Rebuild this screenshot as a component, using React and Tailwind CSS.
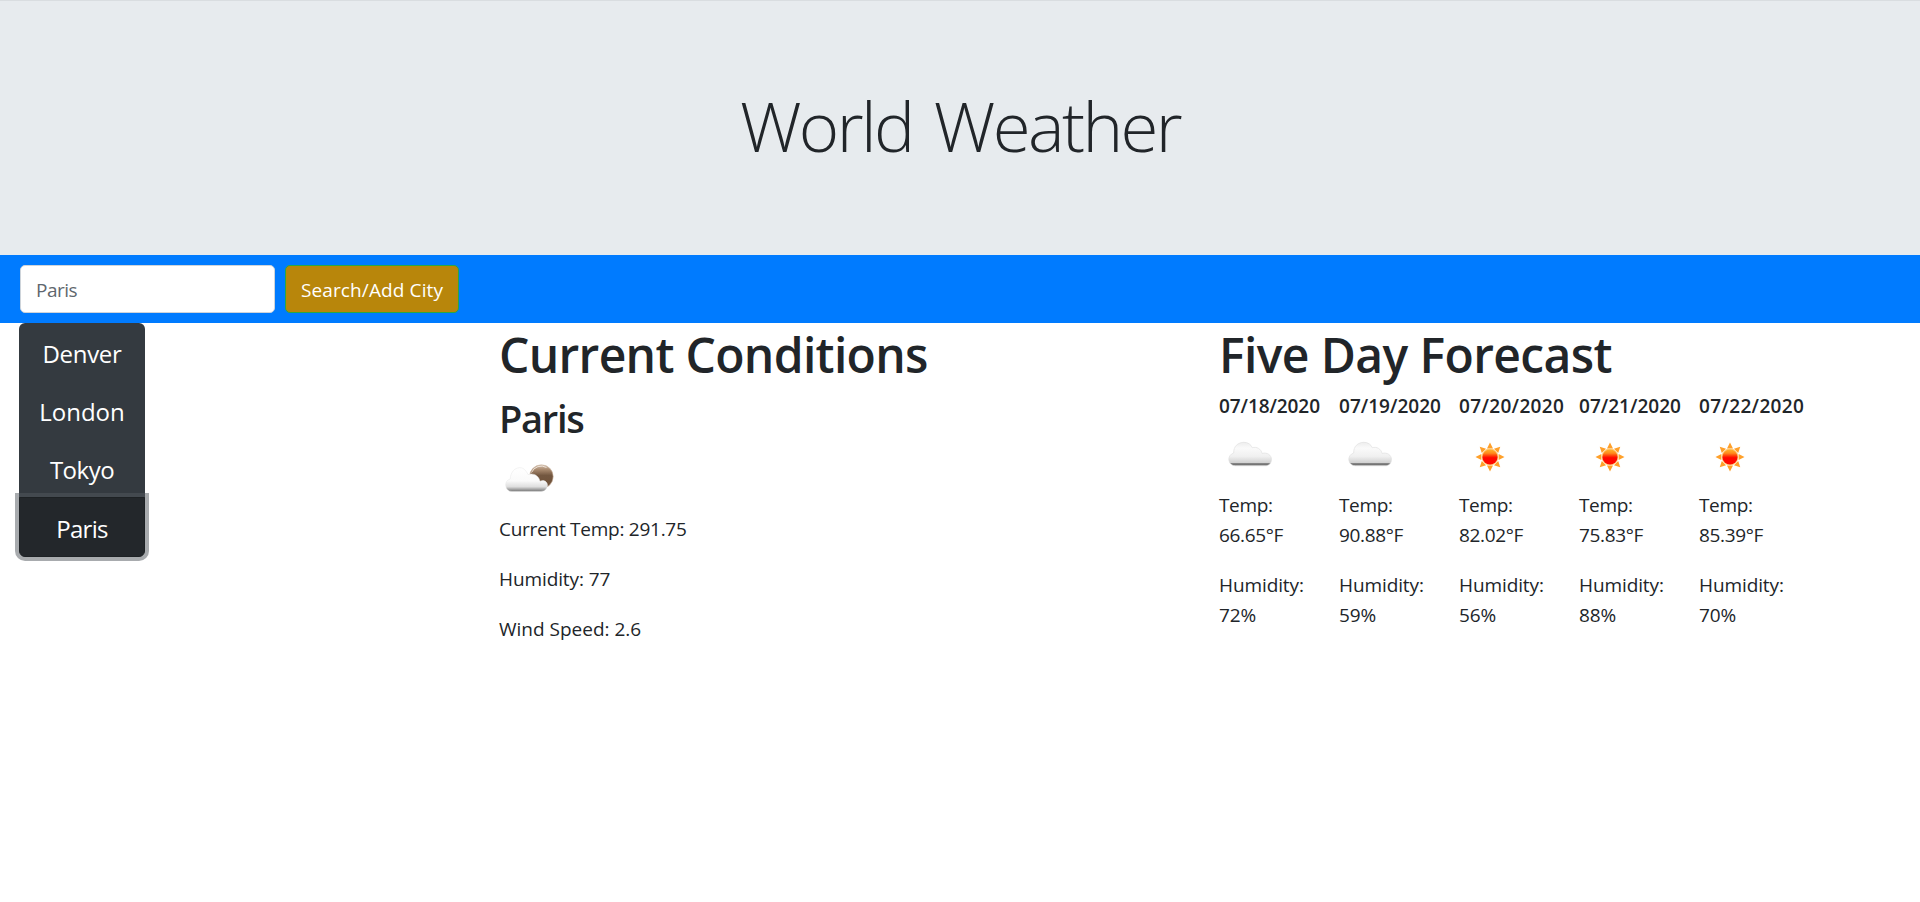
const CITIES = [
  { name: "Denver", className: "rounded-t-[6px] tracking-[-0.3px]" },
  { name: "London", className: "-mt-px tracking-normal" },
  { name: "Tokyo", className: "-mt-px tracking-[-0.5px]" },
];

const FORECAST = [
  { date: "07/18/2020", tracking: "tracking-[-0.08px]", icon: "cloud", temp: "66.65°F", humidity: "72%" },
  { date: "07/19/2020", tracking: "tracking-[0.02px]", icon: "cloud", temp: "90.88°F", humidity: "59%" },
  { date: "07/20/2020", tracking: "tracking-[0.35px]", icon: "sun", temp: "82.02°F", humidity: "56%" },
  { date: "07/21/2020", tracking: "tracking-[0.02px]", icon: "sun", temp: "75.83°F", humidity: "88%" },
  { date: "07/22/2020", tracking: "tracking-[0.35px]", icon: "sun", temp: "85.39°F", humidity: "70%" },
];

function CloudNight() {
  return (
    <svg className="block h-[72px] w-[72px]" viewBox="0 0 72 72" aria-hidden="true">
      <defs>
        <linearGradient id="moon" x1="0" y1="0" x2="0" y2="1">
          <stop offset="0" stopColor="#d3bfad" />
          <stop offset="0.2" stopColor="#aa8b70" />
          <stop offset="0.45" stopColor="#735740" />
          <stop offset="1" stopColor="#6f5138" />
        </linearGradient>
        <linearGradient id="night-cloud" x1="0" y1="0" x2="0" y2="1">
          <stop offset="0" stopColor="#ffffff" />
          <stop offset="0.55" stopColor="#fafafa" />
          <stop offset="0.8" stopColor="#dedede" />
          <stop offset="0.9" stopColor="#a8a8a8" />
          <stop offset="1" stopColor="#777777" />
        </linearGradient>
      </defs>
      <circle cx="42.400" cy="34.600" r="11.800" fill="url(#moon)" stroke="#cdb9a6" strokeWidth="0.6" />
      <path d="M32.500 30.500a10.600 10.600 0 0 1 15-5" fill="none" stroke="#f2e9e0" strokeWidth="0.9" />
      <path
        d="M13 49.500A6.400 6.400 0 0 1 11.200 37C11.700 30 15.800 25.700 20.800 25.700 24.300 25.700 27 28 29 32.600 34 30.700 40 33.500 41 39.300 45.300 37.300 48.500 40 48.500 43.500 48 46.500 46 49.500 42 49.500Z"
        fill="url(#night-cloud)"
        stroke="#e6e6e6"
        strokeWidth="0.5"
      />
    </svg>
  );
}

function Cloud() {
  return (
    <svg className="block h-[69px] w-[69px]" viewBox="0 0 69 69" aria-hidden="true">
      <defs>
        <linearGradient id="cloud" x1="0" y1="0" x2="0" y2="1">
          <stop offset="0" stopColor="#ededed" />
          <stop offset="0.25" stopColor="#fafafa" />
          <stop offset="0.6" stopColor="#f0f0f0" />
          <stop offset="0.86" stopColor="#d2d2d2" />
          <stop offset="0.9" stopColor="#858585" />
          <stop offset="0.96" stopColor="#6f6f6f" />
          <stop offset="1" stopColor="#a5a5a5" />
        </linearGradient>
      </defs>
      <path
        d="M16.500 44.800A6.500 6.500 0 0 1 14.700 32C14.300 25.500 19 21.300 25 21.300 29 21.300 32 23.500 33.300 26.700 37.500 25.300 42.300 28 43 32.400 48 31 52.500 34 52.500 38.500 52.500 42 50 44.800 46.500 44.800Z"
        fill="url(#cloud)"
        stroke="#dddddd"
        strokeWidth="0.6"
      />
    </svg>
  );
}

function Sun() {
  const angles = [0, 45, 90, 135, 180, 225, 270, 315];
  return (
    <svg className="block h-[69px] w-[69px]" viewBox="0 0 69 69" aria-hidden="true">
      <defs>
        <linearGradient id="sun" x1="0" y1="0" x2="0" y2="1">
          <stop offset="0" stopColor="#ffb52b" />
          <stop offset="0.25" stopColor="#ff8a1c" />
          <stop offset="0.45" stopColor="#ff3005" />
          <stop offset="0.55" stopColor="#ff0800" />
          <stop offset="1" stopColor="#ff0800" />
        </linearGradient>
      </defs>
      <g transform="translate(31 36)">
        {angles.map((a) => (
          <path key={a} d="M0-14.500 3-8.600H-3z" fill="#ffa02a" transform={`rotate(${a})`} />
        ))}
        <circle r="8.400" fill="#ffc978" />
        <circle r="7.600" fill="url(#sun)" />
      </g>
    </svg>
  );
}

export default function App() {
  return (
    <div className="min-h-[902px] bg-white font-['Open_Sans','Segoe_UI',sans-serif] text-[19px] leading-[30px] text-[#212529]">
      <header className="h-[255px] border-t border-[#d9dde0] bg-[#e7ebee] pt-[81px] text-center">
        <h1 className="text-[69px] leading-[86px] font-light tracking-[-2.6px] [word-spacing:6px]">World Weather</h1>
      </header>

      <nav className="flex h-[68px] items-center gap-[10px] bg-[#007bff] pl-5">
        <input
          type="text"
          placeholder="Paris"
          className="h-[48px] w-[255px] rounded-[5px] border border-[#ced4da] bg-white px-[15px] pt-px tracking-[-0.5px] placeholder:text-[#5f676e] placeholder:opacity-100"
        />
        <button className="h-[48px] w-[174px] rounded-[5px] border border-[#28a745] bg-[#b8860b] pt-px tracking-[0.12px] whitespace-nowrap text-white">
          Search/Add City
        </button>
      </nav>

      <main className="flex">
        <aside className="w-[480px] shrink-0 pl-[19px] text-2xl leading-[37px] text-white">
          <div className="flex w-[126px] flex-col">
            {CITIES.map((city) => (
              <button key={city.name} className={`h-[59px] bg-[#343a40] pt-px ${city.className}`}>
                {city.name}
              </button>
            ))}
            <button className="relative -mt-px h-[60px] rounded-b-[6px] border border-[#1d2124] bg-[#23272b] pt-[3px] tracking-[-0.7px] shadow-[0_0_0_4px_rgba(82,88,93,0.5)]">
              Paris
            </button>
          </div>
        </aside>

        <section className="w-[720px] shrink-0 pt-[2px] pl-[19px]">
          <h2 className="text-5xl leading-[60px] font-semibold tracking-[-0.68px]">Current Conditions</h2>
          <h3 className="mt-[9px] text-[38px] leading-[48px] font-semibold tracking-[-1.3px]">Paris</h3>
          <CloudNight />
          <p className="tracking-[-0.26px]">Current Temp: 291.75</p>
          <p className="mt-5 tracking-[-0.1px]">Humidity: 77</p>
          <p className="mt-5">Wind Speed: 2.6</p>
        </section>

        <section className="pt-[2px] pl-[19px]">
          <h2 className="text-5xl leading-[60px] font-semibold tracking-[-0.6px]">Five Day Forecast</h2>
          <div className="mt-[6px] grid grid-cols-[repeat(5,120px)]">
            {FORECAST.map((day) => (
              <div key={day.date}>
                <h4 className={`font-semibold ${day.tracking}`}>{day.date}</h4>
                {day.icon === "cloud" ? <Cloud /> : <Sun />}
                <p className="tracking-[-0.35px]">
                  Temp:
                  <br />
                  {day.temp}
                </p>
                <p className="mt-5 tracking-[-0.1px]">
                  Humidity:
                  <br />
                  {day.humidity}
                </p>
              </div>
            ))}
          </div>
        </section>
      </main>
    </div>
  );
}
